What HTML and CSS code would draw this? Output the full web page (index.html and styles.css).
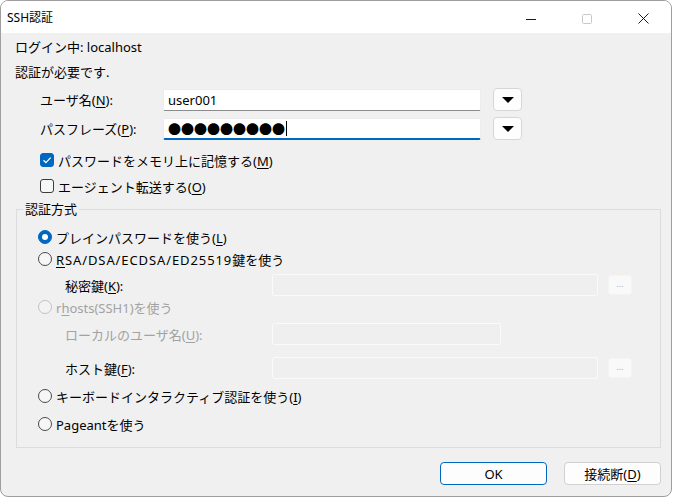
FILE: index.html
```html
<!DOCTYPE html>
<html lang="ja">

<head>
    <meta charset="UTF-8">
    <title>SSH認証</title>
    <link rel="stylesheet" href="styles.css">
</head>

<body>
    <div class="window">
        <div class="titlebar">
            <span class="title">SSH認証</span>
            <div class="caption">
                <span class="cap-btn">
                    <svg width="10" height="10" viewBox="0 0 10 10"><path d="M0 5.5h10" stroke="#1a1a1a" stroke-width="1"/></svg>
                </span>
                <span class="cap-btn">
                    <svg width="10" height="10" viewBox="0 0 10 10"><rect x="0.5" y="0.5" width="9" height="9" rx="1" fill="none" stroke="#c8c8c8"/></svg>
                </span>
                <span class="cap-btn">
                    <svg width="11" height="11" viewBox="0 0 11 11"><path d="M0.5 0.5l10 10M10.5 0.5l-10 10" stroke="#1a1a1a" stroke-width="1"/></svg>
                </span>
            </div>
        </div>

        <form class="client" name="sshAuth">
            <p class="info">ログイン中: localhost</p>
            <p class="info">認証が必要です.</p>

            <div class="field-row">
                <label class="field-label">ユーザ名(<u>N</u>):</label>
                <div class="edit">user001</div>
                <button type="button" class="drop"><span class="tri"></span></button>
            </div>
            <div class="field-row second">
                <label class="field-label">パスフレーズ(<u>P</u>):</label>
                <div class="edit focused"><span class="dots">●●●●●●●●●</span><span class="caret"></span></div>
                <button type="button" class="drop"><span class="tri"></span></button>
            </div>

            <div class="check-row first">
                <span class="checkbox checked">
                    <svg width="10" height="10" viewBox="0 0 10 10"><path d="M1.5 5.2l2.4 2.4 4.8-5" fill="none" stroke="#fff" stroke-width="1.3"/></svg>
                </span>
                <span>パスワードをメモリ上に記憶する(<u>M</u>)</span>
            </div>
            <div class="check-row">
                <span class="checkbox"></span>
                <span>エージェント転送する(<u>O</u>)</span>
            </div>

            <fieldset class="group">
                <legend>認証方式</legend>

                <div class="radio-row r-plain">
                    <span class="radio selected"></span>
                    <span>プレインパスワードを使う(<u>L</u>)</span>
                </div>
                <div class="radio-row r-rsa">
                    <span class="radio"></span>
                    <span><span class="latin"><u>R</u>SA/DSA/ECDSA/ED25519</span>鍵を使う</span>
                </div>
                <div class="sub-row r-key">
                    <label class="sub-label">秘密鍵(<u>K</u>):</label>
                    <div class="edit disabled wide"></div>
                    <button type="button" class="browse">...</button>
                </div>
                <div class="radio-row r-rhosts disabled">
                    <span class="radio"></span>
                    <span>r<u>h</u>osts(SSH1)を使う</span>
                </div>
                <div class="sub-row r-local disabled">
                    <label class="sub-label">ローカルのユーザ名(<u>U</u>):</label>
                    <div class="edit disabled short"></div>
                </div>
                <div class="sub-row r-host">
                    <label class="sub-label">ホスト鍵(<u>F</u>):</label>
                    <div class="edit disabled wide"></div>
                    <button type="button" class="browse">...</button>
                </div>
                <div class="radio-row r-kbd">
                    <span class="radio"></span>
                    <span>キーボードインタラクティブ認証を使う(<u>I</u>)</span>
                </div>
                <div class="radio-row r-pageant">
                    <span class="radio"></span>
                    <span>Pageantを使う</span>
                </div>
            </fieldset>

            <div class="buttons">
                <button type="button" class="push default">OK</button>
                <button type="button" class="push">接続断(<u>D</u>)</button>
            </div>
        </form>
    </div>
</body>

</html>
```

FILE: styles.css
```css
* {
    box-sizing: border-box;
}

body {
    margin: 0;
    background: #fff;
    font-family: "Noto Sans", "Noto Sans CJK JP", sans-serif;
    font-size: 13px;
    color: #000;
}

u {
    text-underline-offset: 2px;
}

.window {
    width: 672px;
    height: 497px;
    border: 1px solid #9e9e9e;
    border-radius: 8px;
    background: #f0f0f0;
    overflow: hidden;
}

/* title bar */

.titlebar {
    height: 32px;
    background: #fff;
    display: flex;
    align-items: center;
}

.title {
    padding-left: 6px;
    font-size: 12px;
    flex: 1;
}

.caption {
    display: flex;
    height: 100%;
}

.cap-btn {
    width: 56px;
    display: flex;
    align-items: center;
    justify-content: center;
    padding-top: 3px;
}

/* dialog body */

.client {
    margin: 0;
    padding: 2px 10px 0 14px;
}

.info {
    margin: 0;
    line-height: 25px;
}

.field-row {
    display: flex;
    align-items: center;
    height: 23px;
    margin: 3px 0 0 25px;
}

.field-row.second {
    margin-top: 6px;
}

.field-label {
    width: 123px;
}

.edit {
    height: 22px;
    background: #fff;
    border: 1px solid #ececec;
    border-bottom-color: #8c8c8c;
    border-radius: 2px;
    display: flex;
    align-items: center;
    padding-left: 4px;
}

.field-row .edit {
    width: 318px;
}

.edit.focused {
    border-bottom: 2px solid #0067c0;
}

.dots {
    font-family: "Noto Sans CJK JP", sans-serif;
    font-size: 13px;
    line-height: 1;
}

.caret {
    width: 1px;
    height: 15px;
    background: #000;
    margin-left: 1px;
}

.drop {
    width: 29px;
    height: 23px;
    margin-left: 12px;
    background: #fdfdfd;
    border: 1px solid #d6d6d6;
    border-radius: 4px;
    display: flex;
    align-items: center;
    justify-content: center;
    padding: 0;
}

.tri {
    width: 0;
    height: 0;
    border-left: 6px solid transparent;
    border-right: 6px solid transparent;
    border-top: 6px solid #000;
}

/* check boxes */

.check-row {
    display: flex;
    align-items: center;
    height: 20px;
    margin: 6px 0 0 25px;
}

.check-row.first {
    margin-top: 10px;
}

.checkbox {
    width: 14px;
    height: 14px;
    border: 1px solid #3c3c3c;
    border-radius: 3px;
    background: #f7f7f7;
    margin-right: 4px;
    display: flex;
    align-items: center;
    justify-content: center;
}

.checkbox.checked {
    background: #0067c0;
    border-color: #0067c0;
}

/* group box */

.group {
    margin: 4px 0 0 1px;
    padding: 0 0 13px 0;
    border: 1px solid #dcdcdc;
    border-radius: 0;
}

.group legend {
    margin-left: 6px;
    padding: 0 2px;
    line-height: 18px;
}

.radio-row {
    display: flex;
    align-items: center;
    height: 20px;
    margin-left: 21px;
}

.radio {
    width: 14px;
    height: 14px;
    border: 1px solid #4a4a4a;
    border-radius: 50%;
    background: #f6f6f6;
    margin-right: 4px;
    position: relative;
}

.radio.selected {
    background: #0067c0;
    border-color: #0067c0;
}

.radio.selected::after {
    content: "";
    position: absolute;
    left: 3px;
    top: 3px;
    width: 6px;
    height: 6px;
    border-radius: 50%;
    background: #fff;
}

.latin {
    letter-spacing: 0.9px;
}

.radio-row.disabled {
    color: #a2a2a2;
}

.radio-row.disabled .radio {
    border-color: #c2c2c2;
    background: #f3f3f3;
}

.sub-row {
    display: flex;
    align-items: center;
    height: 22px;
    margin-left: 48px;
}

.sub-row.disabled {
    color: #a2a2a2;
}

.sub-label {
    width: 207px;
}

.edit.disabled {
    background: #efefef;
    border: 1px solid #fafafa;
}

.edit.wide {
    width: 326px;
}

.edit.short {
    width: 229px;
}

.browse {
    width: 24px;
    height: 20px;
    margin-left: 10px;
    padding: 0 0 4px 0;
    background: #f9f9f9;
    border: 1px solid #f4f4f4;
    border-radius: 3px;
    color: #b0b0b0;
    font-family: inherit;
    font-size: 9px;
}

.r-plain {
    margin-top: 9px;
}

.r-rsa {
    margin-top: 2px;
}

.r-key {
    margin-top: 5px;
}

.r-rhosts {
    margin-top: 1px;
}

.r-local {
    margin-top: 6px;
}

.r-host {
    margin-top: 12px;
}

.r-kbd {
    margin-top: 7px;
}

.r-pageant {
    margin-top: 8px;
}

/* OK / disconnect */

.buttons {
    display: flex;
    justify-content: flex-end;
    gap: 17px;
    margin-top: 14px;
}

.push {
    height: 23px;
    background: #fdfdfd;
    border: 1px solid #d0d0d0;
    border-radius: 4px;
    font-family: inherit;
    font-size: 13px;
    color: #000;
    padding: 0;
}

.push.default {
    width: 107px;
    border: 1px solid #0067c0;
    box-shadow: inset 0 0 0 1px #fdfdfd;
}

.push:last-child {
    width: 97px;
}
```
